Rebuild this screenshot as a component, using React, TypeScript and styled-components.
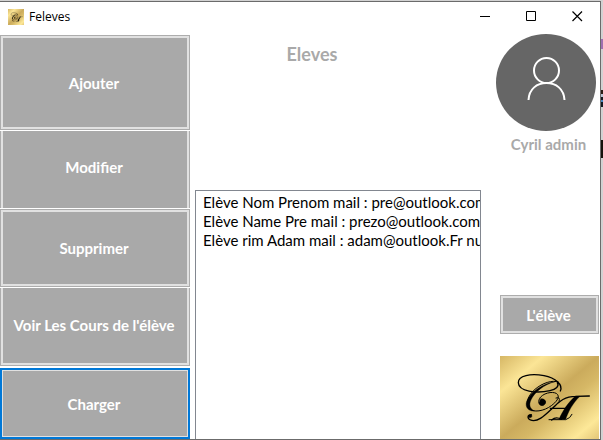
import React from "react";
import styled, { createGlobalStyle, css } from "styled-components";

const GlobalStyle = createGlobalStyle`
  * { box-sizing: border-box; }
  html, body { margin: 0; height: 100%; }
  body { overflow: hidden; font-family: Lato, "Open Sans", sans-serif; }
  #root { height: 100%; }
`;

const Desktop = styled.div`
  display: flex;
  height: 100vh;
  padding-top: 1px;
  background: #d2d2d2;
`;

const WindowFrame = styled.main`
  flex: 1;
  min-width: 0;
  display: flex;
  flex-direction: column;
  background: #fff;
  border: solid #6b6b6b;
  border-width: 1px 1px 1px 0;
`;

const Behind = styled.div`
  width: 2px;
  overflow: hidden;
  padding-top: 38px;
`;

const BehindMark = styled.div<{ $color: string; $height: number; $gap: number }>`
  height: ${(p) => p.$height}px;
  margin-bottom: ${(p) => p.$gap}px;
  background: ${(p) => p.$color};
`;

const TitleBar = styled.header`
  flex: none;
  display: flex;
  align-items: center;
  height: 29px;
  padding-left: 8px;
  font: 12px "Open Sans", sans-serif;
  color: #000;
`;

const WindowTitle = styled.span`
  flex: 1;
  margin-left: 5px;
`;

const CaptionButton = styled.button`
  width: 46px;
  height: 29px;
  padding: 0;
  border: 0;
  background: transparent;
  display: grid;
  place-items: center;
`;

const Content = styled.div`
  flex: 1;
  min-height: 0;
  display: grid;
  grid-template-columns: 190px 1fr 119px;
  padding-top: 4px;
`;

const Menu = styled.nav`
  display: grid;
  grid-template-rows: 95fr 77fr 78fr 78fr 72fr;
  gap: 1px;
  min-height: 0;
`;

const ActionButton = styled.button<{ $edges?: "all" | "sides" | "bottom" | "focus" }>`
  padding: 0 2px 0 0;
  color: #fff;
  background: #a9a9a9;
  font: bold 15px Lato, sans-serif;
  border: 1px solid #adadad;
  box-shadow: inset 0 0 0 2px #e1e1e1;
  ${(p) =>
    p.$edges === "sides" &&
    css`
      padding-bottom: 5px;
      border-width: 0 1px;
      box-shadow: inset 2px 0 #e1e1e1, inset -2px 0 #e1e1e1;
    `}
  ${(p) =>
    p.$edges === "bottom" &&
    css`
      padding-bottom: 3px;
      border-width: 0 1px 1px;
      box-shadow: inset 2px 0 #e1e1e1, inset -2px 0 #e1e1e1, inset 0 -2px #e1e1e1;
    `}
  ${(p) =>
    p.$edges === "focus" &&
    css`
      margin-top: 1px;
      border: 2px solid #0078d7;
      box-shadow: inset 0 0 0 1px #e1e1e1;
    `}
`;

const Center = styled.section`
  display: flex;
  flex-direction: column;
  min-width: 0;
  padding-left: 5px;
`;

const Heading = styled.h1`
  flex: none;
  height: 155px;
  margin: 0;
  padding: 8px 52px 0 0;
  text-align: center;
  font: bold 18px/22px Lato, sans-serif;
  color: #a9a9a9;
`;

const List = styled.ul`
  flex: 1;
  margin: 0;
  padding: 2px 0 0 7px;
  list-style: none;
  overflow: hidden;
  border: 1px solid #828790;
  border-bottom: 0;
  font: 15px/19px Lato, sans-serif;
  color: #000;
  white-space: nowrap;
`;

const Side = styled.aside`
  display: flex;
  flex-direction: column;
  align-items: stretch;
  padding: 0 1px 0 19px;
`;

const Avatar = styled.svg`
  flex: none;
  width: 100px;
  height: 97px;
  margin: -1px 0 0 -4px;
`;

const UserName = styled.p`
  margin: 3px 0 0;
  padding-right: 2px;
  height: 161px;
  text-align: center;
  font: bold 15px/20px Lato, sans-serif;
  color: #a9a9a9;
`;

const StudentButton = styled(ActionButton)`
  flex: none;
  height: 39px;
`;

const Logo = styled.svg`
  flex: 1;
  min-height: 0;
  margin-top: 22px;
  width: 100%;
`;

const Monogram = ({ id }: { id: string }) => (
  <>
    <defs>
      <linearGradient id={id} x1="0" y1="0" x2="1" y2="1">
        <stop offset="0" stopColor="#d6b765" />
        <stop offset="0.22" stopColor="#fbe596" />
        <stop offset="0.5" stopColor="#cbab5c" />
        <stop offset="0.62" stopColor="#d6b866" />
        <stop offset="0.87" stopColor="#fde898" />
        <stop offset="1" stopColor="#e3c678" />
      </linearGradient>
    </defs>
    <rect width="99" height="83" fill={`url(#${id})`} />
    <g transform="translate(0 9) scale(.3333)" fill="none" stroke="#000" strokeLinecap="round" strokeLinejoin="round">
      <path strokeWidth="4" d="M181 78C190 58 166 39 132 32C92 24 54 32 55 53C56 79 108 86 150 77C168 73 179 64 172 53" />
      <path strokeWidth="3" d="M175 51C157 44 127 54 105 73C84 91 76 116 86 129C99 145 133 138 154 122C169 111 179 98 173 89C166 78 136 81 122 96C112 107 116 123 128 121C137 119 139 108 131 104" />
      <path fill="#000" strokeWidth="1" d="M165 50C130 54 91 80 80 109C74 128 86 139 103 138C90 131 86 120 93 105C103 82 131 59 165 50Z" />
      <path fill="#000" strokeWidth="1" d="M122 101C134 100 140 108 135 116C129 124 118 122 117 113Z" />
      <path strokeWidth="4" d="M94 149C82 149 81 160 91 165C112 173 133 153 154 133C181 106 195 94 228 94L268 93M151 130H207M155 165Q168 153 184 163" />
      <path fill="#000" strokeWidth="1" d="M86 151C94 147 99 152 94 157C89 160 84 157 86 151Z" />
      <path fill="#000" strokeWidth="1" d="M226 94L240 94C216 116 205 142 197 163L177 163C188 138 204 112 226 94Z" />
      <path strokeWidth="3" d="M147 164H197Q211 160 216 148M168 99Q182 94 177 110L163 126" />
    </g>
  </>
);

export default function App() {
  return (
    <Desktop>
      <GlobalStyle />
      <WindowFrame>
        <TitleBar>
          <svg width="16" height="16" viewBox="0 0 99 83" preserveAspectRatio="none" aria-hidden="true">
            <Monogram id="gold-small" />
          </svg>
          <WindowTitle>Feleves</WindowTitle>
          <CaptionButton aria-label="Réduire"><svg width="11" height="11"><path d="M0 5.5H10" stroke="#000" /></svg></CaptionButton>
          <CaptionButton aria-label="Agrandir"><svg width="11" height="11"><path d="M.5 .5H9.500V9.500H.5Z" fill="none" stroke="#000" /></svg></CaptionButton>
          <CaptionButton aria-label="Fermer"><svg width="11" height="11"><path d="M.5 .5L10 10M10 .5L.5 10" stroke="#000" strokeWidth="1.200" /></svg></CaptionButton>
        </TitleBar>
        <Content>
          <Menu>
            <ActionButton>Ajouter</ActionButton>
            <ActionButton $edges="sides">Modifier</ActionButton>
            <ActionButton>Supprimer</ActionButton>
            <ActionButton $edges="bottom">Voir Les Cours de l'élève</ActionButton>
            <ActionButton $edges="focus">Charger</ActionButton>
          </Menu>
          <Center>
            <Heading>Eleves</Heading>
            <List>
              <li>Elève Nom Prenom mail : pre@outlook.com</li>
              <li>Elève Name Pre mail : prezo@outlook.com</li>
              <li>Elève rim Adam mail : adam@outlook.Fr nu</li>
            </List>
          </Center>
          <Side>
            <Avatar viewBox="0 0 100 97" aria-hidden="true">
              <ellipse cx="50" cy="48.5" rx="50" ry="48.5" fill="#666" />
              <g fill="none" stroke="#fff" strokeWidth="2">
                <circle cx="50.500" cy="36.500" r="12.500" />
                <path d="M32.500 66C33 55 41 49 50.500 49S68 55 68.500 66" />
              </g>
            </Avatar>
            <UserName>Cyril admin</UserName>
            <StudentButton>L'élève</StudentButton>
            <Logo viewBox="0 0 99 83" preserveAspectRatio="none" aria-hidden="true">
              <Monogram id="gold-large" />
            </Logo>
          </Side>
        </Content>
      </WindowFrame>
      <Behind>
        <BehindMark $color="#a070b0" $height={10} $gap={41} />
        <BehindMark $color="linear-gradient(#2a1c14 4px, #b9c4d4 4px 7px, #14181f 7px 10px, #4a86c0 10px 12px, #14181f 12px)" $height={17} $gap={33} />
        <BehindMark $color="#17120c" $height={18} $gap={0} />
      </Behind>
    </Desktop>
  );
}
